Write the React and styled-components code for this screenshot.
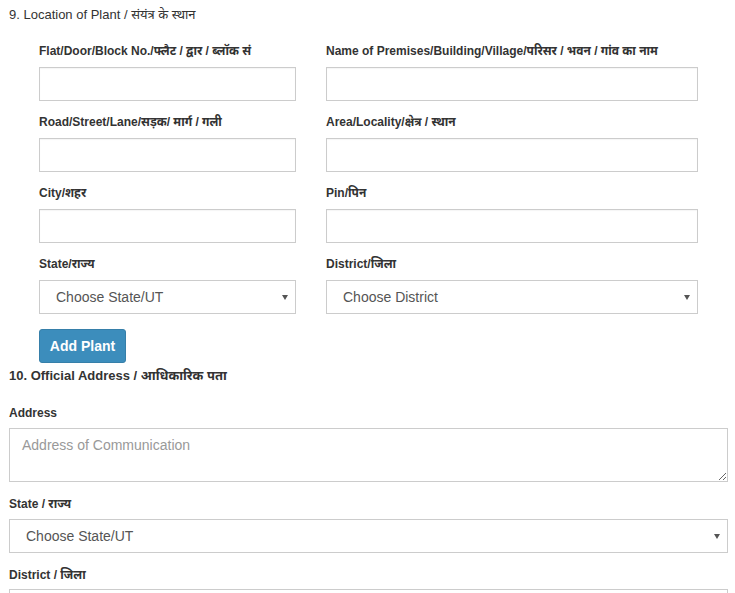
import styled, { createGlobalStyle } from 'styled-components';

const GlobalStyle = createGlobalStyle`
  html, body {
    margin: 0;
    padding: 0;
    background: #fff;
  }
  body {
    font-family: 'Liberation Sans', Arial, 'Noto Sans Devanagari', 'Lohit Devanagari', 'Noto Sans', sans-serif;
    color: #333;
  }
  * {
    box-sizing: border-box;
  }
`;

const Page = styled.div`
  padding: 6px 7px 0 9px;
  height: 593px;
  overflow: hidden;
`;

const SectionTitle = styled.div`
  font-size: 13px;
  line-height: 18px;
  font-weight: ${(p) => (p.$bold ? 700 : 400)};
  color: #333;
  margin-top: ${(p) => p.$top || 0}px;
`;

const PlantGrid = styled.div`
  display: grid;
  grid-template-columns: 257px 372px;
  column-gap: 30px;
  row-gap: 13px;
  margin: 19px 0 0 30px;
`;

const Field = styled.div`
  display: flex;
  flex-direction: column;
  gap: ${(p) => p.$gap || 8}px;
`;

const Label = styled.label`
  font-size: 12px;
  line-height: 16px;
  font-weight: 700;
  color: #333;
  white-space: nowrap;
`;

const TextInput = styled.input`
  display: block;
  width: 100%;
  height: 34px;
  border: 1px solid #ccc;
  border-radius: 0;
  padding: 6px 12px;
  font-family: inherit;
  font-size: 14px;
  outline: none;
  box-shadow: inset 0 1px 1px rgba(0, 0, 0, 0.04);
`;

const SelectWrap = styled.div`
  position: relative;
  width: 100%;
`;

const Select = styled.select`
  display: block;
  width: 100%;
  height: 34px;
  border: 1px solid #ccc;
  border-radius: 0;
  background: #fff;
  padding: 0 24px 0 16px;
  font-family: inherit;
  font-size: 14px;
  color: #555;
  appearance: none;
  -webkit-appearance: none;
  outline: none;
`;

const Arrow = styled.span`
  position: absolute;
  right: 8px;
  top: 15px;
  width: 0;
  height: 0;
  border-left: 3px solid transparent;
  border-right: 3px solid transparent;
  border-top: 5px solid #555;
  pointer-events: none;
`;

const AddButton = styled.button`
  display: block;
  margin: 15px 0 0 30px;
  width: 87px;
  height: 34px;
  background: #3c8dbc;
  border: 1px solid #367fa9;
  border-radius: 3px;
  color: #fff;
  font-family: inherit;
  font-size: 14px;
  font-weight: 700;
  padding: 0;
  cursor: pointer;
`;

const AddressBlock = styled.div`
  display: flex;
  flex-direction: column;
  gap: 14px;
  margin-top: 20px;
`;

const TextArea = styled.textarea`
  display: block;
  width: 100%;
  height: 54px;
  border: 1px solid #ccc;
  border-radius: 0;
  padding: 8px 12px;
  font-family: inherit;
  font-size: 14px;
  line-height: 16px;
  color: #555;
  outline: none;
  &::placeholder {
    color: #999;
  }
`;

const ChooseSelect = ({ text }) => (
  <SelectWrap>
    <Select defaultValue="">
      <option value="">{text}</option>
    </Select>
    <Arrow />
  </SelectWrap>
);

const plantFields = [
  { label: 'Flat/Door/Block No./फ्लैट / द्वार / ब्लॉक सं' },
  { label: 'Name of Premises/Building/Village/परिसर / भवन / गांव का नाम' },
  { label: 'Road/Street/Lane/सड़क/ मार्ग / गली' },
  { label: 'Area/Locality/क्षेत्र / स्थान' },
  { label: 'City/शहर' },
  { label: 'Pin/पिन' },
  { label: 'State/राज्य', select: 'Choose State/UT' },
  { label: 'District/जिला', select: 'Choose District' },
];

const App = () => {
  return (
    <>
      <GlobalStyle />
      <Page>
        <SectionTitle>9. Location of Plant / संयंत्र के स्थान</SectionTitle>
        <PlantGrid>
          {plantFields.map((f) => (
            <Field key={f.label}>
              <Label>{f.label}</Label>
              {f.select ? <ChooseSelect text={f.select} /> : <TextInput type="text" />}
            </Field>
          ))}
        </PlantGrid>
        <AddButton type="button">Add Plant</AddButton>

        <SectionTitle $bold $top={4}>
          10. Official Address / आधिकारिक पता
        </SectionTitle>
        <AddressBlock>
          <Field $gap={7}>
            <Label>Address</Label>
            <TextArea placeholder="Address of Communication" />
          </Field>
          <Field $gap={7}>
            <Label>State / राज्य</Label>
            <ChooseSelect text="Choose State/UT" />
          </Field>
          <Field $gap={6}>
            <Label>District / जिला</Label>
            <ChooseSelect text="Choose District" />
          </Field>
        </AddressBlock>
      </Page>
    </>
  );
};

export default App;
